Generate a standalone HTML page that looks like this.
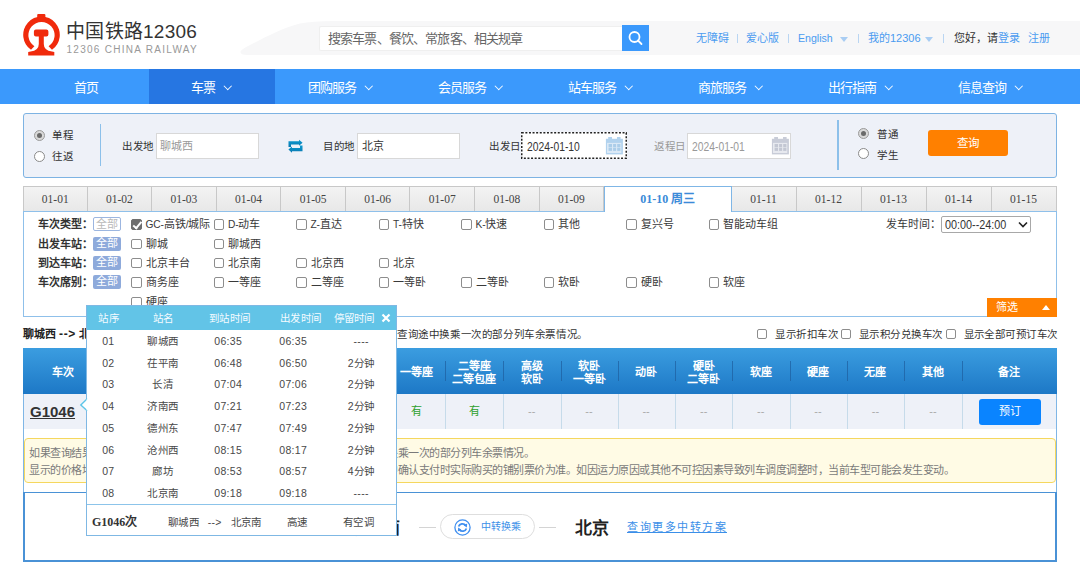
<!DOCTYPE html>
<html lang="zh-CN">
<head>
<meta charset="utf-8">
<style>
*{margin:0;padding:0;box-sizing:border-box;}
html,body{width:1080px;height:574px;overflow:hidden;background:#fff;}
body{position:relative;font-family:"Liberation Sans",sans-serif;color:#333;font-size:11px;}
.a{position:absolute;white-space:nowrap;}
/* header */
#trainbg{position:absolute;left:0;top:0;}
.hl{color:#4a9bf0;font-size:11px;top:32px;line-height:12px;}
.sep{position:absolute;top:34px;width:1px;height:9px;background:#b9d5f2;}
.tri{position:absolute;top:37px;width:0;height:0;border-left:4px solid transparent;border-right:4px solid transparent;border-top:5px solid #a9cdf3;}
/* nav */
#nav{position:absolute;left:0;top:69px;width:1080px;height:35px;background:#3b99fc;}
.nv{position:absolute;top:1px;height:35px;line-height:35px;color:#fff;font-size:13px;letter-spacing:-1px;}
.chev{display:inline-block;width:5.5px;height:5.5px;border-right:1.6px solid #fff;border-bottom:1.6px solid #fff;transform:rotate(45deg);position:relative;top:-3.5px;margin-left:10px;}
/* query box */
#qbox{position:absolute;left:23px;top:113px;width:1034px;height:65px;background:#eef1f8;border:1px solid #7db3e3;border-radius:3px;}
.radio{position:absolute;width:11px;height:11px;border-radius:50%;border:1px solid #8a8a8a;background:#fff;}
.radio.on{background:#d9d9d9;border-color:#9a9a9a;}
.radio.on::after{content:"";position:absolute;left:2px;top:2px;width:5px;height:5px;border-radius:50%;background:#6a6a6a;}
.inp{position:absolute;height:26px;background:#fff;border:1px solid #d8d8d8;}
.lbl{font-size:10.5px;letter-spacing:0.5px;color:#333;line-height:14px;}
/* tabs */
.tab{position:absolute;top:186px;height:25px;background:linear-gradient(#f3f3f3,#e8e8e8);border-top:1px solid #c8c8c8;border-right:1px solid #c8c8c8;text-align:center;line-height:24px;font-family:"Liberation Serif",serif;font-size:11.5px;color:#444;}
.tab.act{background:#fff;border:1px solid #7fb6e6;border-bottom:none;height:26px;color:#3b8ad8;font-weight:bold;font-size:12px;z-index:2;}

/* filter */
#fpanel{position:absolute;left:23px;top:211px;width:1034px;height:106px;border:1px solid #8fc0ea;background:#fff;}
.fl{font-size:11px;font-weight:bold;color:#333;line-height:12px;}
.all{position:absolute;width:28px;height:14px;border-radius:2px;font-size:11px;line-height:12px;text-align:center;}
.cb{position:absolute;width:10.5px;height:10.5px;border:1px solid #8d8d8d;border-radius:2px;background:#fff;}
.cb.on{background:#6e6e6e;border-color:#6e6e6e;}
.cb.on::after{content:"";position:absolute;left:2.6px;top:0px;width:3.2px;height:6.5px;border-right:2px solid #fff;border-bottom:2px solid #fff;transform:rotate(40deg);}
.ct{font-size:11px;color:#3a3a3a;line-height:12px;}
.lt{font-size:10.2px;letter-spacing:-0.15px;}

/* results */
.th{position:absolute;top:349.5px;height:46px;color:#fff;font-weight:bold;font-size:11px;line-height:13px;text-align:center;display:flex;align-items:center;justify-content:center;}
.thd{position:absolute;top:361px;width:1px;height:20px;background:#1e5e9e;opacity:.7}
.td{position:absolute;top:394px;height:35px;line-height:35px;text-align:center;font-size:11px;color:#aaa;}
.tdd{position:absolute;top:394px;width:1px;height:35px;background:#c6dbea;}
/* popup */
#pop{position:absolute;left:86px;top:305px;width:311px;height:231px;background:#fff;border:1px solid #7fb8e4;z-index:10;}
.ph{position:absolute;top:0;height:24px;line-height:24px;color:#f4fbff;font-size:10.5px;letter-spacing:0.3px;text-indent:0.3px;text-align:center;}
.pr{position:absolute;font-size:10.5px;letter-spacing:0.3px;text-indent:0.3px;color:#484848;text-align:center;line-height:14px;}
</style>
</head>
<body>
<!-- header train background -->
<svg id="trainbg" width="1080" height="70">
<path d="M247 55 Q240 55 240.5 51.5 Q241.5 49 250 45 C266 37, 282 28, 300 23.5 Q312 21 335 21 L1080 21 L1080 55 Z" fill="#f7f7f8"/>
</svg>
<!-- logo -->
<svg class="a" style="left:23px;top:13px" width="38" height="44" viewBox="0 0 38 44">
<path d="M8.0 36.8 A18.3 18.3 0 1 1 29.0 36.8 L25.6 33.2 A13.1 13.1 0 1 0 11.4 33.2 Z" fill="#f02a0c"/>
<rect x="14.2" y="1" width="8.2" height="5" rx="1" fill="#f02a0c"/>
<path d="M10.9 18.6 Q10.9 16.6 12.9 16.6 H23.4 Q25.4 16.6 25.4 18.6 V21.6 Q25.4 23.6 23.4 23.6 H20.8 V31 Q20.8 37.5 29 38.5 L31.3 38.9 V42.5 H5.2 V38.9 L7.6 38.5 Q15.8 37.5 15.8 31 V23.6 H12.9 Q10.9 23.6 10.9 21.6 Z" fill="#f02a0c"/>
</svg>
<div class="a" style="left:66px;top:19.5px;font-size:19px;letter-spacing:0.25px;line-height:24px;color:#333;">中国铁路12306</div>
<div class="a" style="left:66.5px;top:44px;font-size:10px;line-height:12px;color:#999;letter-spacing:1.28px;">12306 CHINA RAILWAY</div>
<!-- search -->
<div class="a" style="left:319px;top:26px;width:303px;height:25px;background:#fff;border:1px solid #efefef;border-right:none;border-radius:2px 0 0 2px"></div>
<div class="a" style="left:328px;top:30px;font-size:13px;letter-spacing:-0.85px;line-height:17px;color:#666;">搜索车票、餐饮、常旅客、相关规章</div>
<div class="a" style="left:622px;top:25px;width:27px;height:26px;background:#3b99fc;"></div>
<svg class="a" style="left:622px;top:25px" width="27" height="26"><circle cx="12.5" cy="12" r="5" fill="none" stroke="#fff" stroke-width="1.8"/><line x1="16" y1="15.5" x2="19.5" y2="19" stroke="#fff" stroke-width="1.8" stroke-linecap="round"/></svg>
<div class="a hl" style="left:696px;">无障碍</div>
<div class="sep" style="left:737px"></div>
<div class="a hl" style="left:746px;">爱心版</div>
<div class="sep" style="left:788px"></div>
<div class="a hl" style="left:798px;font-size:10.6px">English</div>
<div class="tri" style="left:840px"></div>
<div class="sep" style="left:858px"></div>
<div class="a hl" style="left:868px;">我的12306</div>
<div class="tri" style="left:925px"></div>
<div class="sep" style="left:943px"></div>
<div class="a hl" style="left:954px;color:#333;">您好，请<span style="color:#4a9bf0">登录</span></div>
<div class="a hl" style="left:1028px;">注册</div>
<!-- nav -->
<div id="nav">
<div class="a" style="left:149px;top:0;width:126px;height:35px;background:#2676e2;"></div>
<div class="nv" style="left:74px">首页</div>
<div class="nv" style="left:191px">车票<i class="chev"></i></div>
<div class="nv" style="left:308px">团购服务<i class="chev"></i></div>
<div class="nv" style="left:438px">会员服务<i class="chev"></i></div>
<div class="nv" style="left:568px">站车服务<i class="chev"></i></div>
<div class="nv" style="left:698px">商旅服务<i class="chev"></i></div>
<div class="nv" style="left:828px">出行指南<i class="chev"></i></div>
<div class="nv" style="left:958px">信息查询<i class="chev"></i></div>
</div>
<!-- query box -->
<div id="qbox"></div>
<div class="radio on" style="left:34px;top:130px"></div>
<div class="a lbl" style="left:52px;top:128px">单程</div>
<div class="radio" style="left:34px;top:150.7px"></div>
<div class="a lbl" style="left:52px;top:149px">往返</div>
<div class="a" style="left:100px;top:124px;width:1px;height:42px;background:#8cc0ea"></div>
<div class="a lbl" style="left:122px;top:139px">出发地</div>
<div class="inp" style="left:156px;top:133px;width:103px;"></div>
<div class="a" style="left:160px;top:140px;font-size:11px;color:#999;line-height:12px">聊城西</div>
<svg class="a" style="left:287px;top:139px" width="17" height="15" viewBox="287 139 17 15">
<defs><linearGradient id="sg" x1="0" y1="0" x2="0" y2="1"><stop offset="0" stop-color="#0b9ad0"/><stop offset="1" stop-color="#0a78b0"/></linearGradient></defs>
<path d="M288.5 141.2 H299 V139.8 L302.6 142.8 L299 145.8 V144.5 H291 V147 H288.5 Z" fill="url(#sg)"/>
<path d="M302.5 151.2 H292 V152.8 L288.4 149.6 L292 146.6 V148 H300 V145.5 H302.5 Z" fill="url(#sg)"/>
</svg>
<div class="a lbl" style="left:323px;top:139px">目的地</div>
<div class="inp" style="left:357px;top:133px;width:103px;"></div>
<div class="a" style="left:362px;top:140px;font-size:11px;color:#333;line-height:12px">北京</div>
<div class="a lbl" style="left:489px;top:139px">出发日</div>
<div class="a" style="left:521px;top:132px;width:106px;height:27px;background:#fff"></div><svg class="a" style="left:521px;top:132px" width="106" height="27"><rect x="0.75" y="0.75" width="104.5" height="25.5" fill="none" stroke="#222" stroke-width="1.5" stroke-dasharray="2 1.6"/></svg>
<div class="a" style="left:526.5px;top:140px;font-size:12.3px;color:#333;line-height:14px;transform:scaleX(0.84);transform-origin:0 0">2024-01-10</div>
<svg class="a" style="left:605px;top:136px" width="19" height="19" viewBox="0 0 19 19"><rect x="3.2" y="1" width="3.8" height="3" fill="#b1d2ee"/><rect x="12" y="1" width="3.6" height="3" fill="#b1d2ee"/><rect x="0.9" y="2.8" width="17" height="15.6" fill="#b1d2ee"/><rect x="2" y="6.9" width="14.3" height="10.1" fill="#dbe9f6"/><g fill="#abcde9"><rect x="3.6" y="8" width="3.4" height="3"/><rect x="8.1" y="8" width="3" height="3"/><rect x="12.2" y="8" width="3.2" height="3"/><rect x="3.6" y="11.6" width="3.4" height="3.3"/><rect x="8.1" y="11.6" width="3" height="3.3"/><rect x="12.2" y="11.6" width="3.2" height="3.3"/></g></svg>
<div class="a lbl" style="left:654px;top:139px;color:#999">返程日</div>
<div class="inp" style="left:687px;top:133px;width:104px;"></div>
<div class="a" style="left:691.5px;top:140px;font-size:12.3px;color:#999;line-height:14px;transform:scaleX(0.84);transform-origin:0 0">2024-01-01</div>
<svg class="a" style="left:770.5px;top:136px" width="19" height="19" viewBox="0 0 19 19"><rect x="3.2" y="1" width="3.8" height="3" fill="#c8ccd8"/><rect x="12" y="1" width="3.6" height="3" fill="#c8ccd8"/><rect x="0.9" y="2.8" width="17" height="15.6" fill="#c8ccd8"/><rect x="2" y="6.9" width="14.3" height="10.1" fill="#e7e9ef"/><g fill="#c3c7d3"><rect x="3.6" y="8" width="3.4" height="3"/><rect x="8.1" y="8" width="3" height="3"/><rect x="12.2" y="8" width="3.2" height="3"/><rect x="3.6" y="11.6" width="3.4" height="3.3"/><rect x="8.1" y="11.6" width="3" height="3.3"/><rect x="12.2" y="11.6" width="3.2" height="3.3"/></g></svg>
<div class="a" style="left:837px;top:120px;width:1.5px;height:50px;background:#8cc0ea"></div>
<div class="radio on" style="left:858px;top:128px"></div>
<div class="a lbl" style="left:877px;top:127px">普通</div>
<div class="radio" style="left:858px;top:148px"></div>
<div class="a lbl" style="left:877px;top:148px">学生</div>
<div class="a" style="left:928px;top:130px;width:80px;height:26px;background:#ff8000;border-radius:3px;color:#fff;font-size:11.5px;line-height:26px;text-align:center">查询</div>
<div id="fpanel"></div>
<div class="tab" style="left:23.00px;width:64.58px;border-left:1px solid #c8c8c8;">01-01</div>
<div class="tab" style="left:87.58px;width:64.58px;">01-02</div>
<div class="tab" style="left:152.16px;width:64.58px;">01-03</div>
<div class="tab" style="left:216.74px;width:64.58px;">01-04</div>
<div class="tab" style="left:281.32px;width:64.58px;">01-05</div>
<div class="tab" style="left:345.90px;width:64.58px;">01-06</div>
<div class="tab" style="left:410.48px;width:64.58px;">01-07</div>
<div class="tab" style="left:475.06px;width:64.58px;">01-08</div>
<div class="tab" style="left:539.64px;width:64.58px;">01-09</div>
<div class="tab act" style="left:604px;width:127.5px;">01-10 周三</div>
<div class="tab" style="left:731.50px;width:65.00px;">01-11</div>
<div class="tab" style="left:796.50px;width:65.00px;">01-12</div>
<div class="tab" style="left:861.50px;width:65.00px;">01-13</div>
<div class="tab" style="left:926.50px;width:65.00px;">01-14</div>
<div class="tab" style="left:991.50px;width:65.00px;">01-15</div>
<div class="a fl" style="left:38px;top:218.0px">车次类型：</div>
<div class="all" style="left:93px;top:217.0px;border:1px solid #9cb6e0;color:#b9b9b9;background:#fff;line-height:12px">全部</div>
<div class="cb on" style="left:131.0px;top:219.0px"></div>
<div class="a ct" style="left:145.5px;top:218.0px"><span class="lt">GC-</span>高铁<span class="lt">/</span>城际</div>
<div class="cb" style="left:213.5px;top:219.0px"></div>
<div class="a ct" style="left:228.0px;top:218.0px"><span class="lt">D-</span>动车</div>
<div class="cb" style="left:296.0px;top:219.0px"></div>
<div class="a ct" style="left:310.5px;top:218.0px"><span class="lt">Z-</span>直达</div>
<div class="cb" style="left:378.5px;top:219.0px"></div>
<div class="a ct" style="left:393.0px;top:218.0px"><span class="lt">T-</span>特快</div>
<div class="cb" style="left:461.0px;top:219.0px"></div>
<div class="a ct" style="left:475.5px;top:218.0px"><span class="lt">K-</span>快速</div>
<div class="cb" style="left:543.5px;top:219.0px"></div>
<div class="a ct" style="left:558.0px;top:218.0px">其他</div>
<div class="cb" style="left:626.0px;top:219.0px"></div>
<div class="a ct" style="left:640.5px;top:218.0px">复兴号</div>
<div class="cb" style="left:708.5px;top:219.0px"></div>
<div class="a ct" style="left:723.0px;top:218.0px">智能动车组</div>
<div class="a fl" style="left:38px;top:237.5px">出发车站：</div>
<div class="all" style="left:93px;top:236.5px;background:#8eaadb;color:#fff;">全部</div>
<div class="cb" style="left:131.0px;top:238.5px"></div>
<div class="a ct" style="left:145.5px;top:237.5px">聊城</div>
<div class="cb" style="left:213.5px;top:238.5px"></div>
<div class="a ct" style="left:228.0px;top:237.5px">聊城西</div>
<div class="a fl" style="left:38px;top:256.5px">到达车站：</div>
<div class="all" style="left:93px;top:255.5px;background:#8eaadb;color:#fff;">全部</div>
<div class="cb" style="left:131.0px;top:257.5px"></div>
<div class="a ct" style="left:145.5px;top:256.5px">北京丰台</div>
<div class="cb" style="left:213.5px;top:257.5px"></div>
<div class="a ct" style="left:228.0px;top:256.5px">北京南</div>
<div class="cb" style="left:296.0px;top:257.5px"></div>
<div class="a ct" style="left:310.5px;top:256.5px">北京西</div>
<div class="cb" style="left:378.5px;top:257.5px"></div>
<div class="a ct" style="left:393.0px;top:256.5px">北京</div>
<div class="a fl" style="left:38px;top:276.0px">车次席别：</div>
<div class="all" style="left:93px;top:275.0px;background:#8eaadb;color:#fff;">全部</div>
<div class="cb" style="left:131.0px;top:277.0px"></div>
<div class="a ct" style="left:145.5px;top:276.0px">商务座</div>
<div class="cb" style="left:213.5px;top:277.0px"></div>
<div class="a ct" style="left:228.0px;top:276.0px">一等座</div>
<div class="cb" style="left:296.0px;top:277.0px"></div>
<div class="a ct" style="left:310.5px;top:276.0px">二等座</div>
<div class="cb" style="left:378.5px;top:277.0px"></div>
<div class="a ct" style="left:393.0px;top:276.0px">一等卧</div>
<div class="cb" style="left:461.0px;top:277.0px"></div>
<div class="a ct" style="left:475.5px;top:276.0px">二等卧</div>
<div class="cb" style="left:543.5px;top:277.0px"></div>
<div class="a ct" style="left:558.0px;top:276.0px">软卧</div>
<div class="cb" style="left:626.0px;top:277.0px"></div>
<div class="a ct" style="left:640.5px;top:276.0px">硬卧</div>
<div class="cb" style="left:708.5px;top:277.0px"></div>
<div class="a ct" style="left:723.0px;top:276.0px">软座</div>
<div class="cb" style="left:131px;top:296.5px"></div>
<div class="a ct" style="left:145.5px;top:295.5px">硬座</div>
<div class="a ct" style="left:886px;top:218px">发车时间：</div>
<div class="a" style="left:941px;top:216px;width:89.5px;height:17px;border:1px solid #a8a8a8;border-radius:2px;background:#fff;font-size:12.3px;line-height:17.5px;padding-left:3px;color:#333"><span style="display:inline-block;transform:scaleX(0.88);transform-origin:0 50%">00:00--24:00</span></div>
<svg class="a" style="left:1018px;top:221px" width="10" height="7"><path d="M1 1.5 L5 5.5 L9 1.5" fill="none" stroke="#222" stroke-width="1.6"/></svg>
<div class="a" style="left:987px;top:298px;width:70px;height:19px;background:#ff8000;"></div>
<div class="a" style="left:996px;top:301px;color:#fff;font-size:11px;line-height:13px">筛选</div>
<div class="a" style="left:1042px;top:305px;width:0;height:0;border-left:4.5px solid transparent;border-right:4.5px solid transparent;border-bottom:5px solid #fff"></div>
<div class="a" style="left:23px;top:327.5px;font-size:11px;font-weight:bold;line-height:12px;color:#222">聊城西 <span style="font-size:12px;letter-spacing:0.6px">--&gt;</span> 北京（1月10日 周三）共计12个车次</div>
<div class="a" style="left:397px;top:328px;font-size:10.5px;letter-spacing:0.6px;line-height:12px;color:#333">查询途中换乘一次的部分列车余票情况。</div>
<div class="cb" style="left:757px;top:329px;width:10px;height:10px"></div>
<div class="a" style="left:775px;top:328px;font-size:10.5px;letter-spacing:0.5px;line-height:12px;color:#333">显示折扣车次</div>
<div class="cb" style="left:841px;top:329px;width:10px;height:10px"></div>
<div class="a" style="left:859px;top:328px;font-size:10.5px;letter-spacing:0.45px;line-height:12px;color:#333">显示积分兑换车次</div>
<div class="cb" style="left:945.5px;top:329px;width:10px;height:10px"></div>
<div class="a" style="left:963.5px;top:328px;font-size:10.5px;letter-spacing:0.45px;line-height:12px;color:#333">显示全部可预订车次</div>
<div class="a" style="left:23px;top:348px;width:1034px;height:46px;background:linear-gradient(#3b9de0,#1d78c6);"></div>
<div class="th" style="left:23px;width:79px">车次</div>
<div class="th" style="left:113px;width:77.0px">出发站<br>到达站</div>
<div class="thd" style="left:113.0px"></div>
<div class="th" style="left:190px;width:78.0px">出发时间<br>到达时间</div>
<div class="thd" style="left:190.0px"></div>
<div class="th" style="left:268px;width:62.0px">历时</div>
<div class="thd" style="left:268.0px"></div>
<div class="th" style="left:330px;width:58.0px">商务座<br>特等座</div>
<div class="thd" style="left:330.0px"></div>
<div class="th" style="left:388px;width:57.7px">一等座</div>
<div class="thd" style="left:388.0px"></div>
<div class="th" style="left:445.2px;width:57.7px">二等座<br>二等包座</div>
<div class="thd" style="left:445.2px"></div>
<div class="th" style="left:503px;width:57.4px">高级<br>软卧</div>
<div class="thd" style="left:503px"></div>
<div class="th" style="left:560.5px;width:57.0px">软卧<br>一等卧</div>
<div class="thd" style="left:560.5px"></div>
<div class="th" style="left:617.5px;width:57.2px">动卧</div>
<div class="thd" style="left:617.5px"></div>
<div class="th" style="left:675px;width:57.5px">硬卧<br>二等卧</div>
<div class="thd" style="left:675.0px"></div>
<div class="th" style="left:732px;width:57.5px">软座</div>
<div class="thd" style="left:732px"></div>
<div class="th" style="left:789.5px;width:57.0px">硬座</div>
<div class="thd" style="left:790.0px"></div>
<div class="th" style="left:846.8px;width:57.4px">无座</div>
<div class="thd" style="left:847.0px"></div>
<div class="th" style="left:904px;width:58.0px">其他</div>
<div class="thd" style="left:904px"></div>
<div class="th" style="left:962px;width:94.6px">备注</div>
<div class="thd" style="left:962px"></div>
<div class="a" style="left:23px;top:394px;width:1034px;height:35px;background:#eef1f8;"></div>
<div class="tdd" style="left:113.0px"></div>
<div class="tdd" style="left:190.0px"></div>
<div class="tdd" style="left:268.0px"></div>
<div class="tdd" style="left:330.0px"></div>
<div class="tdd" style="left:388.0px"></div>
<div class="td" style="left:388px;width:57.7px;color:#2ca02c">有</div>
<div class="tdd" style="left:445.2px"></div>
<div class="td" style="left:445.2px;width:57.7px;color:#2ca02c">有</div>
<div class="tdd" style="left:503px"></div>
<div class="td" style="left:503px;width:57.4px;color:#aaa">--</div>
<div class="tdd" style="left:560.5px"></div>
<div class="td" style="left:560.5px;width:57.0px;color:#aaa">--</div>
<div class="tdd" style="left:617.5px"></div>
<div class="td" style="left:617.5px;width:57.2px;color:#aaa">--</div>
<div class="tdd" style="left:675.0px"></div>
<div class="td" style="left:675px;width:57.5px;color:#aaa">--</div>
<div class="tdd" style="left:732px"></div>
<div class="td" style="left:732px;width:57.5px;color:#aaa">--</div>
<div class="tdd" style="left:790.0px"></div>
<div class="td" style="left:789.5px;width:57.0px;color:#aaa">--</div>
<div class="tdd" style="left:847.0px"></div>
<div class="td" style="left:846.8px;width:57.4px;color:#aaa">--</div>
<div class="tdd" style="left:904px"></div>
<div class="td" style="left:904px;width:58.0px;color:#aaa">--</div>
<div class="tdd" style="left:962px"></div>
<div class="a" style="left:30px;top:402.5px;font-size:15px;font-weight:bold;line-height:18px;color:#333;text-decoration:underline;text-underline-offset:1px;text-decoration-thickness:1px">G1046</div>
<div class="a" style="left:979px;top:399px;width:62px;height:25.5px;background:#0a84ff;border-radius:3px;color:#fff;font-size:11px;line-height:25px;text-align:center">预订</div>
<div class="a" style="left:23px;top:394px;width:1px;height:98px;background:#7fb6e6"></div>
<div class="a" style="left:1056px;top:394px;width:1px;height:98px;background:#7fb6e6"></div>
<div class="a" style="left:24px;top:438px;width:1032px;height:44.5px;background:#fffbe5;border:1px solid #f5d75e;border-radius:4px"></div>
<div class="a" style="left:29px;top:444.5px;font-size:11px;letter-spacing:-0.5px;line-height:17.7px;color:#7a7a7a">如果查询结果中没有满足需求的车次，您还可以使用接续换乘功能，<span style="margin-left:1.2px"></span>查询途中换乘一次的部分列车余票情况。<br>显示的价格均为实际活动折扣后票价，供您参考，<span style="margin-left:1.2px"></span>具体票价请以您在支付页面中确认支付时实际购买的铺别票价为准。如因运力原因或其他不可控因素导致列车调度调整时，当前车型可能会发生变动。</div>
<div class="a" style="left:23px;top:492px;width:1034px;height:70px;border:1px solid #4a92d6;border-width:1px 2px 2px 2px;background:#fff"></div>
<div class="a" style="left:349px;top:518.5px;font-family:'Liberation Serif',serif;font-size:17px;font-weight:bold;line-height:20px;color:#222">聊城西</div>
<div class="a" style="left:418.5px;top:526.5px;width:17px;height:1px;background:#d4d4d4"></div>
<div class="a" style="left:439.5px;top:514px;width:95.5px;height:25px;border:1px solid #dedede;border-radius:13px;background:#fff"></div>
<svg class="a" style="left:453px;top:518px" width="19" height="19" viewBox="0 0 19 19"><circle cx="9.5" cy="9.5" r="7.6" fill="none" stroke="#3f8ff0" stroke-width="1.3"/><path d="M5.6 8.6 A4 4 0 0 1 12.6 7.4" fill="none" stroke="#3f8ff0" stroke-width="1.8"/><path d="M13.4 10.4 A4 4 0 0 1 6.4 11.6" fill="none" stroke="#3f8ff0" stroke-width="1.8"/><path d="M10.6 7.2 L14.2 5.6 L13.8 9.4 Z" fill="#3f8ff0"/><path d="M8.4 11.8 L4.8 13.4 L5.2 9.6 Z" fill="#3f8ff0"/></svg>
<div class="a" style="left:481px;top:521px;font-size:10px;line-height:12px;color:#3b8fe8">中转换乘</div>
<div class="a" style="left:539px;top:526.5px;width:17px;height:1px;background:#d4d4d4"></div>
<div class="a" style="left:575px;top:518.5px;font-family:'Liberation Serif',serif;font-size:17px;font-weight:bold;line-height:20px;color:#222">北京</div>
<div class="a" style="left:627px;top:520.5px;font-size:11px;letter-spacing:1.5px;line-height:13px;color:#3b8fe8;text-decoration:underline">查询更多中转方案</div>
<div id="pop">
<div class="a" style="left:0;top:0;width:309px;height:23.8px;background:#62c4e7"></div>
<div class="ph" style="left:-18.5px;width:80px">站序</div>
<div class="ph" style="left:35.8px;width:80px">站名</div>
<div class="ph" style="left:102.4px;width:80px">到站时间</div>
<div class="ph" style="left:173.4px;width:80px">出发时间</div>
<div class="ph" style="left:227.0px;width:80px">停留时间</div>
<svg class="a" style="left:294px;top:7px" width="10" height="10"><path d="M1.5 1.5 L8.5 8.5 M8.5 1.5 L1.5 8.5" stroke="#fff" stroke-width="2.2"/></svg>
<div class="pr" style="left:-18.8px;width:80px;top:28.0px">01</div>
<div class="pr" style="left:35.6px;width:80px;top:28.0px">聊城西</div>
<div class="pr" style="left:101.0px;width:80px;top:28.0px">06:35</div>
<div class="pr" style="left:166.0px;width:80px;top:28.0px">06:35</div>
<div class="pr" style="left:234.0px;width:80px;top:28.0px">----</div>
<div class="pr" style="left:-18.8px;width:80px;top:49.7px">02</div>
<div class="pr" style="left:35.6px;width:80px;top:49.7px">茌平南</div>
<div class="pr" style="left:101.0px;width:80px;top:49.7px">06:48</div>
<div class="pr" style="left:166.0px;width:80px;top:49.7px">06:50</div>
<div class="pr" style="left:234.0px;width:80px;top:49.7px">2分钟</div>
<div class="pr" style="left:-18.8px;width:80px;top:71.4px">03</div>
<div class="pr" style="left:35.6px;width:80px;top:71.4px">长清</div>
<div class="pr" style="left:101.0px;width:80px;top:71.4px">07:04</div>
<div class="pr" style="left:166.0px;width:80px;top:71.4px">07:06</div>
<div class="pr" style="left:234.0px;width:80px;top:71.4px">2分钟</div>
<div class="pr" style="left:-18.8px;width:80px;top:93.2px">04</div>
<div class="pr" style="left:35.6px;width:80px;top:93.2px">济南西</div>
<div class="pr" style="left:101.0px;width:80px;top:93.2px">07:21</div>
<div class="pr" style="left:166.0px;width:80px;top:93.2px">07:23</div>
<div class="pr" style="left:234.0px;width:80px;top:93.2px">2分钟</div>
<div class="pr" style="left:-18.8px;width:80px;top:114.9px">05</div>
<div class="pr" style="left:35.6px;width:80px;top:114.9px">德州东</div>
<div class="pr" style="left:101.0px;width:80px;top:114.9px">07:47</div>
<div class="pr" style="left:166.0px;width:80px;top:114.9px">07:49</div>
<div class="pr" style="left:234.0px;width:80px;top:114.9px">2分钟</div>
<div class="pr" style="left:-18.8px;width:80px;top:136.6px">06</div>
<div class="pr" style="left:35.6px;width:80px;top:136.6px">沧州西</div>
<div class="pr" style="left:101.0px;width:80px;top:136.6px">08:15</div>
<div class="pr" style="left:166.0px;width:80px;top:136.6px">08:17</div>
<div class="pr" style="left:234.0px;width:80px;top:136.6px">2分钟</div>
<div class="pr" style="left:-18.8px;width:80px;top:158.3px">07</div>
<div class="pr" style="left:35.6px;width:80px;top:158.3px">廊坊</div>
<div class="pr" style="left:101.0px;width:80px;top:158.3px">08:53</div>
<div class="pr" style="left:166.0px;width:80px;top:158.3px">08:57</div>
<div class="pr" style="left:234.0px;width:80px;top:158.3px">4分钟</div>
<div class="pr" style="left:-18.8px;width:80px;top:180.0px">08</div>
<div class="pr" style="left:35.6px;width:80px;top:180.0px">北京南</div>
<div class="pr" style="left:101.0px;width:80px;top:180.0px">09:18</div>
<div class="pr" style="left:166.0px;width:80px;top:180.0px">09:18</div>
<div class="pr" style="left:234.0px;width:80px;top:180.0px">----</div>
<div class="a" style="left:0;top:198px;width:309px;height:1px;background:#8cc4ea"></div>
<div class="a" style="left:5px;top:209px;font-family:'Liberation Serif',serif;font-weight:bold;font-size:12px;line-height:14px;color:#333">G1046次</div>
<div class="pr" style="left:56.4px;width:80px;top:209px">聊城西</div>
<div class="pr" style="left:87.5px;width:80px;top:209px">--&gt;</div>
<div class="pr" style="left:119.0px;width:80px;top:209px">北京南</div>
<div class="pr" style="left:170.0px;width:80px;top:209px">高速</div>
<div class="pr" style="left:231.5px;width:80px;top:209px">有空调</div>
</div>
<svg class="a" style="left:79px;top:398px;z-index:11" width="10" height="14"><path d="M8.2 0.8 L1.8 6.9 L8.2 12.8" fill="#fff" stroke="#5ec6e8" stroke-width="1.4"/><rect x="7.6" y="1.2" width="2.4" height="11.2" fill="#fff"/></svg>
</body>
</html>
